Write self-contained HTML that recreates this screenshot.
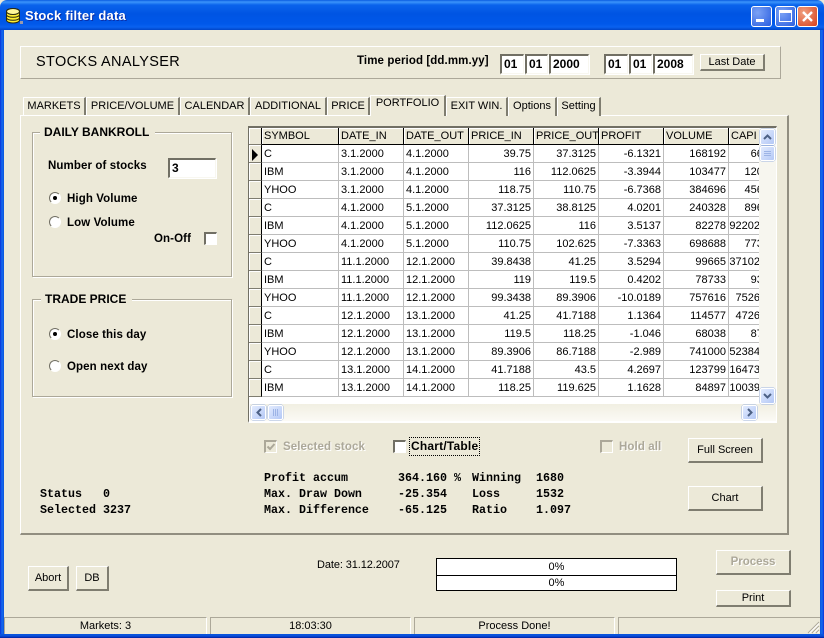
<!DOCTYPE html>
<html><head><meta charset="utf-8"><style>
html,body{margin:0;padding:0;width:824px;height:638px;overflow:hidden;background:#ECE9D8}
body{position:relative;font:11px "Liberation Sans",sans-serif;color:#000}
.a{position:absolute;white-space:nowrap}
.b{font-weight:bold;font-size:11.5px;letter-spacing:.1px;margin-top:1px}
.m{font:bold 11.67px/16px "Liberation Mono",monospace;white-space:pre;position:absolute}
.bevel{position:absolute;box-sizing:border-box;border:1px solid;border-color:#fff #aca899 #aca899 #fff}
.panel{position:absolute;box-sizing:border-box;border-style:solid;border-width:1px 2px 2px 1px;border-color:#fff #918e80 #918e80 #fff}
.group{position:absolute;box-sizing:border-box;border:1px solid #aca899;box-shadow:1px 1px 0 #fff,inset 1px 1px 0 #fff}
.leg{position:absolute;background:#ECE9D8;font-weight:bold;font-size:12px;line-height:14px;white-space:nowrap;padding:0 6px 0 4px;top:-8px}
.btn{position:absolute;box-sizing:border-box;border-style:solid;border-width:1px 2px 2px 1px;border-color:#fff #7f7d70 #7f7d70 #fff;background:#ECE9D8;text-align:center}
.inp{position:absolute;box-sizing:border-box;background:#fff;border-style:solid;border-width:2px 1px 1px 2px;border-color:#716f64 #f8f7f0 #f8f7f0 #716f64;font-weight:bold;font-size:12px;line-height:17px;padding-left:2px;box-shadow:1px 1px 0 #fff}
.tab{position:absolute;box-sizing:border-box;top:97px;height:19px;background:#ECE9D8;border-style:solid;border-width:1px 2px 0 1px;border-color:#fff #7f7d70 #fff #fff;text-align:center;line-height:16px;white-space:nowrap;overflow:hidden}
.chk{position:absolute;box-sizing:border-box;width:13px;height:13px;border-style:solid;border-width:2px 1px 1px 2px;border-color:#716f64 #fff #fff #716f64;background:#fff}
.rad{position:absolute;width:12px;height:12px;border-radius:50%;box-sizing:border-box;background:#fff;border:1px solid;border-color:#716f64 #fff #fff #716f64}
.rad i{position:absolute;left:3px;top:3px;width:4px;height:4px;border-radius:50%;background:#000}
table{position:absolute;left:249px;top:128px;border-collapse:separate;border-spacing:0;table-layout:fixed;width:510px;background:#fff}
th{height:17px;padding:1px 0 0 2px;box-sizing:border-box;background:#ECE9D8;font-weight:normal;text-align:left;border-right:1px solid #000;border-bottom:1px solid #000;box-shadow:inset 1px 1px 0 #fff;overflow:hidden;white-space:nowrap;line-height:15px}
td{height:18px;box-sizing:border-box;padding:1px 2px 0 2px;border-right:1px solid #bdbdbd;border-bottom:1px solid #bdbdbd;text-align:right;overflow:hidden;white-space:nowrap;line-height:16px}
td.l{text-align:left}
td.i,th.i{background:#ECE9D8;padding:0;border-right:1px solid #000;border-bottom:1px solid #7f7d70;box-shadow:inset 1px 1px 0 #fff}
td.c{border-right:0;padding:0;position:relative}
td.c span{position:absolute;right:-1px;top:1px}
td.c span.f{right:-10px}
.sb{position:absolute;box-sizing:border-box;background:linear-gradient(135deg,#e2ebfe,#b4c8f6);border:1px solid #fff;border-radius:2px;box-shadow:0 0 0 .5px #9db4e0}
.st{position:absolute;top:617px;height:17px;box-sizing:border-box;border-top:1px solid #aca899;border-left:1px solid #aca899;border-right:1px solid #fff;text-align:center;line-height:17px}
.wb{position:absolute;box-sizing:border-box;top:6px;width:21px;height:21px;border:1px solid #fff;border-radius:3px}
.g{color:#aca899;text-shadow:1px 1px 0 #fff}
</style></head><body>

<!-- window frame -->
<div class="a" style="left:0;top:0;width:824px;height:30px;border-radius:7px 7px 0 0;background:linear-gradient(180deg,#0a5ce0 0,#3b94fb 2px,#0a63ec 5px,#0054e3 14px,#0058ea 24px,#0a62f0 27px,#0045c8 30px)"></div>
<div class="a" style="left:0;top:30px;width:4px;height:608px;background:linear-gradient(90deg,#0831d9,#166aee 50%,#0855dd)"></div>
<div class="a" style="left:820px;top:30px;width:4px;height:608px;background:linear-gradient(90deg,#0855dd,#166aee 50%,#0831d9)"></div>
<div class="a" style="left:0;top:634px;width:824px;height:4px;background:linear-gradient(180deg,#0855dd,#0a4fdb,#001ea0)"></div>

<svg class="a" style="left:5px;top:7px" width="18" height="18" viewBox="0 0 18 18">
<path d="M1.5 4.5 C1.5 .5 14.5 .5 14.5 4.5 V13 C14.5 17 1.5 17 1.5 13Z" fill="#ffee30" stroke="#2a2a10"/>
<ellipse cx="8" cy="4.5" rx="6.5" ry="3" fill="#fff79a" stroke="#2a2a10"/>
<path d="M1.5 8C3 11 13 11 14.5 8M1.5 11C3 14 13 14 14.5 11" fill="none" stroke="#2a2a10"/>
<rect x="15" y="14" width="3" height="3" fill="#99a"/>
</svg>
<div class="a" style="left:25px;top:8px;color:#fff;font:bold 13px/16px 'Liberation Sans',sans-serif;letter-spacing:.2px;text-shadow:1px 1px 0 #0a2fa8">Stock filter data</div>

<div class="wb" style="left:751px;background:radial-gradient(circle at 30% 30%,#7ba2f5,#2a5ee0)"><div class="a" style="left:4px;top:12px;width:8px;height:3px;background:#fff"></div></div>
<div class="wb" style="left:775px;background:radial-gradient(circle at 30% 30%,#7ba2f5,#2a5ee0)"><div class="a" style="left:3px;top:3px;width:13px;height:12px;box-sizing:border-box;border:1px solid #fff;border-top-width:3px"></div></div>
<div class="wb" style="left:797px;background:radial-gradient(circle at 30% 30%,#f0a080,#d8401c)"><svg class="a" style="left:3px;top:3px" width="13" height="13"><path d="M2 2L11 11M11 2L2 11" stroke="#fff" stroke-width="2.4"/></svg></div>

<!-- header panel -->
<div class="bevel" style="left:20px;top:46px;width:761px;height:33px"></div>
<div class="a" style="left:36px;top:53px;font-size:14.5px;line-height:18px;letter-spacing:.35px">STOCKS ANALYSER</div>
<div class="a b" style="left:357px;top:53px;line-height:15px">Time period [dd.mm.yy]</div>
<div class="inp" style="left:500px;top:54px;width:24px;height:20px">01</div>
<div class="inp" style="left:525px;top:54px;width:23px;height:20px">01</div>
<div class="inp" style="left:549px;top:54px;width:40px;height:20px">2000</div>
<div class="inp" style="left:604px;top:54px;width:24px;height:20px">01</div>
<div class="inp" style="left:629px;top:54px;width:23px;height:20px">01</div>
<div class="inp" style="left:653px;top:54px;width:40px;height:20px">2008</div>
<div class="btn" style="left:700px;top:54px;width:65px;height:17px;line-height:14px">Last Date</div>

<!-- tabs -->
<div class="tab" style="left:23px;width:63px">MARKETS</div>
<div class="tab" style="left:86px;width:94px">PRICE/VOLUME</div>
<div class="tab" style="left:180px;width:70px">CALENDAR</div>
<div class="tab" style="left:250px;width:77px">ADDITIONAL</div>
<div class="tab" style="left:327px;width:43px">PRICE</div>
<div class="panel" style="left:20px;top:115px;width:769px;height:420px"></div>
<div class="tab" style="left:370px;top:95px;width:76px;height:21px;line-height:15px;z-index:2">PORTFOLIO</div>
<div class="tab" style="left:446px;width:62px">EXIT WIN.</div>
<div class="tab" style="left:508px;width:49px">Options</div>
<div class="tab" style="left:557px;width:44px">Setting</div>

<!-- groups -->
<div class="group" style="left:32px;top:132px;width:200px;height:145px"><div class="leg" style="left:7px">DAILY BANKROLL</div></div>
<div class="a b" style="left:48px;top:158px;line-height:15px">Number of stocks</div>
<div class="inp" style="left:168px;top:158px;width:48px;height:20px">3</div>
<div class="rad" style="left:49px;top:192px"><i></i></div><div class="a b" style="left:67px;top:191px;line-height:15px">High Volume</div>
<div class="rad" style="left:49px;top:216px"></div><div class="a b" style="left:67px;top:215px;line-height:15px">Low Volume</div>
<div class="a b" style="left:154px;top:231px;line-height:15px">On-Off</div>
<div class="chk" style="left:204px;top:232px"></div>

<div class="group" style="left:32px;top:299px;width:200px;height:98px"><div class="leg" style="left:8px">TRADE PRICE</div></div>
<div class="rad" style="left:49px;top:328px"><i></i></div><div class="a b" style="left:67px;top:327px;line-height:15px">Close this day</div>
<div class="rad" style="left:49px;top:360px"></div><div class="a b" style="left:67px;top:359px;line-height:15px">Open next day</div>

<!-- grid frame -->
<div class="a" style="left:248px;top:126px;width:529px;height:297px;box-sizing:border-box;border-style:solid;border-width:2px 1px 2px 1px;border-color:#716f64 #fff #fff #716f64;background:#fff"></div>
<table>
<colgroup><col style="width:13px"><col style="width:77px"><col style="width:65px"><col style="width:65px"><col style="width:65px"><col style="width:65px"><col style="width:65px"><col style="width:65px"><col style="width:30px"></colgroup>
<tr><th class="i"></th><th>SYMBOL</th><th>DATE_IN</th><th>DATE_OUT</th><th>PRICE_IN</th><th>PRICE_OUT</th><th>PROFIT</th><th>VOLUME</th><th style="border-right:0">CAPI</th></tr>
<tr><td class="i"><svg width="8" height="12" style="display:block;margin:2px 0 0 3px"><path d="M0 0L6 6L0 12Z"/></svg></td><td class="l">C</td><td class="l">3.1.2000</td><td class="l">4.1.2000</td><td>39.75</td><td>37.3125</td><td>-6.1321</td><td>168192</td><td class="c"><span class="f">668</span></td></tr>
<tr><td class="i"></td><td class="l">IBM</td><td class="l">3.1.2000</td><td class="l">4.1.2000</td><td>116</td><td>112.0625</td><td>-3.3944</td><td>103477</td><td class="c"><span class="f">1200</span></td></tr>
<tr><td class="i"></td><td class="l">YHOO</td><td class="l">3.1.2000</td><td class="l">4.1.2000</td><td>118.75</td><td>110.75</td><td>-6.7368</td><td>384696</td><td class="c"><span class="f">4560</span></td></tr>
<tr><td class="i"></td><td class="l">C</td><td class="l">4.1.2000</td><td class="l">5.1.2000</td><td>37.3125</td><td>38.8125</td><td>4.0201</td><td>240328</td><td class="c"><span class="f">8960</span></td></tr>
<tr><td class="i"></td><td class="l">IBM</td><td class="l">4.1.2000</td><td class="l">5.1.2000</td><td>112.0625</td><td>116</td><td>3.5137</td><td>82278</td><td class="c"><span>92202</span></td></tr>
<tr><td class="i"></td><td class="l">YHOO</td><td class="l">4.1.2000</td><td class="l">5.1.2000</td><td>110.75</td><td>102.625</td><td>-7.3363</td><td>698688</td><td class="c"><span class="f">7730</span></td></tr>
<tr><td class="i"></td><td class="l">C</td><td class="l">11.1.2000</td><td class="l">12.1.2000</td><td>39.8438</td><td>41.25</td><td>3.5294</td><td>99665</td><td class="c"><span>37102</span></td></tr>
<tr><td class="i"></td><td class="l">IBM</td><td class="l">11.1.2000</td><td class="l">12.1.2000</td><td>119</td><td>119.5</td><td>0.4202</td><td>78733</td><td class="c"><span class="f">930</span></td></tr>
<tr><td class="i"></td><td class="l">YHOO</td><td class="l">11.1.2000</td><td class="l">12.1.2000</td><td>99.3438</td><td>89.3906</td><td>-10.0189</td><td>757616</td><td class="c"><span>7526</span></td></tr>
<tr><td class="i"></td><td class="l">C</td><td class="l">12.1.2000</td><td class="l">13.1.2000</td><td>41.25</td><td>41.7188</td><td>1.1364</td><td>114577</td><td class="c"><span>4726</span></td></tr>
<tr><td class="i"></td><td class="l">IBM</td><td class="l">12.1.2000</td><td class="l">13.1.2000</td><td>119.5</td><td>118.25</td><td>-1.046</td><td>68038</td><td class="c"><span class="f">870</span></td></tr>
<tr><td class="i"></td><td class="l">YHOO</td><td class="l">12.1.2000</td><td class="l">13.1.2000</td><td>89.3906</td><td>86.7188</td><td>-2.989</td><td>741000</td><td class="c"><span>52384</span></td></tr>
<tr><td class="i"></td><td class="l">C</td><td class="l">13.1.2000</td><td class="l">14.1.2000</td><td>41.7188</td><td>43.5</td><td>4.2697</td><td>123799</td><td class="c"><span>16473</span></td></tr>
<tr><td class="i"></td><td class="l">IBM</td><td class="l">13.1.2000</td><td class="l">14.1.2000</td><td>118.25</td><td>119.625</td><td>1.1628</td><td>84897</td><td class="c"><span>10039</span></td></tr>
</table>

<!-- scrollbars -->
<div class="a" style="left:759px;top:128px;width:17px;height:276px;background:#f7f6ef"></div>
<div class="a" style="left:250px;top:404px;width:526px;height:17px;background:linear-gradient(180deg,#f1efe2,#fbfaf5)"></div>
<div class="sb" style="left:760px;top:129px;width:15px;height:16px"><svg class="a" style="left:2px;top:3px" width="9" height="8"><path d="M1 6L4.5 2.5L8 6" fill="none" stroke="#4d6185" stroke-width="2"/></svg></div>
<div class="sb" style="left:760px;top:146px;width:15px;height:15px"><svg class="a" style="left:3px;top:3px" width="8" height="8"><path d="M0 1.5H7M0 3.5H7M0 5.5H7" stroke="#9db4e6"/></svg></div>
<div class="sb" style="left:760px;top:388px;width:15px;height:16px"><svg class="a" style="left:2px;top:3px" width="9" height="8"><path d="M1 2L4.5 5.5L8 2" fill="none" stroke="#4d6185" stroke-width="2"/></svg></div>
<div class="sb" style="left:251px;top:405px;width:15px;height:15px"><svg class="a" style="left:3px;top:2px" width="8" height="9"><path d="M6 1L2.5 4.5L6 8" fill="none" stroke="#4d6185" stroke-width="2"/></svg></div>
<div class="sb" style="left:268px;top:405px;width:15px;height:15px"><svg class="a" style="left:3px;top:3px" width="8" height="8"><path d="M1.5 0V7M3.5 0V7M5.5 0V7" stroke="#9db4e6"/></svg></div>
<div class="sb" style="left:742px;top:405px;width:15px;height:15px"><svg class="a" style="left:3px;top:2px" width="8" height="9"><path d="M2 1L5.5 4.5L2 8" fill="none" stroke="#4d6185" stroke-width="2"/></svg></div>

<!-- options below grid -->
<div class="chk" style="left:264px;top:440px;background:#ECE9D8;border-color:#aca899 #fff #fff #aca899"><svg class="a" style="left:0;top:0" width="10" height="10"><path d="M1.5 4.5L4 7L8.5 2" fill="none" stroke="#aca899" stroke-width="2"/></svg></div>
<div class="a b g" style="left:283px;top:439px;line-height:15px">Selected stock</div>
<div class="chk" style="left:393px;top:440px"></div>
<div class="a" style="left:411px;top:439px;line-height:15px;outline:1px dotted #000;outline-offset:1px;font-weight:bold;font-size:12px;letter-spacing:.2px">Chart/Table</div>
<div class="chk" style="left:600px;top:440px;background:#ECE9D8;border-color:#aca899 #fff #fff #aca899"></div>
<div class="a b g" style="left:619px;top:439px;line-height:15px">Hold all</div>
<div class="btn" style="left:688px;top:438px;width:75px;height:25px;line-height:23px">Full Screen</div>
<div class="btn" style="left:688px;top:486px;width:75px;height:25px;line-height:22px">Chart</div>

<!-- stats -->
<div class="m" style="left:40px;top:486px">Status   0
Selected 3237</div>
<div class="m" style="left:264px;top:470px">Profit accum
Max. Draw Down
Max. Difference</div>
<div class="m" style="left:398px;top:470px">364.160 %
-25.354
-65.125</div>
<div class="m" style="left:472px;top:470px">Winning
Loss
Ratio</div>
<div class="m" style="left:536px;top:470px">1680
1532
1.097</div>

<!-- bottom -->
<div class="btn" style="left:28px;top:566px;width:41px;height:25px;line-height:22px">Abort</div>
<div class="btn" style="left:76px;top:566px;width:33px;height:25px;line-height:22px">DB</div>
<div class="a" style="left:317px;top:558px;line-height:15px;letter-spacing:-.1px">Date: 31.12.2007</div>
<div class="a" style="left:436px;top:558px;width:241px;height:33px;box-sizing:border-box;border:1px solid #000;background:#fff"></div>
<div class="a" style="left:436px;top:575px;width:241px;height:1px;background:#000"></div>
<div class="a" style="left:436px;top:559px;width:241px;text-align:center;line-height:16px">0%</div>
<div class="a" style="left:436px;top:575px;width:241px;text-align:center;line-height:16px">0%</div>
<div class="btn g" style="left:716px;top:550px;width:75px;height:25px;line-height:23px;font-weight:bold;font-size:11.5px">Process</div>
<div class="btn" style="left:716px;top:590px;width:75px;height:17px;line-height:14px">Print</div>

<!-- status bar -->
<div class="st" style="left:4px;width:203px">Markets: 3</div>
<div class="st" style="left:210px;width:201px">18:03:30</div>
<div class="st" style="left:414px;width:201px">Process Done!</div>
<div class="st" style="left:618px;width:202px;border-right:0"></div>
<svg class="a" style="left:807px;top:621px" width="13" height="13"><path d="M12 1L1 12M12 5L5 12M12 9L9 12" stroke="#aca899"/><path d="M12 2.5L2.5 12M12 6.5L6.5 12M12 10.5L10.5 12" stroke="#fff"/></svg>

</body></html>
